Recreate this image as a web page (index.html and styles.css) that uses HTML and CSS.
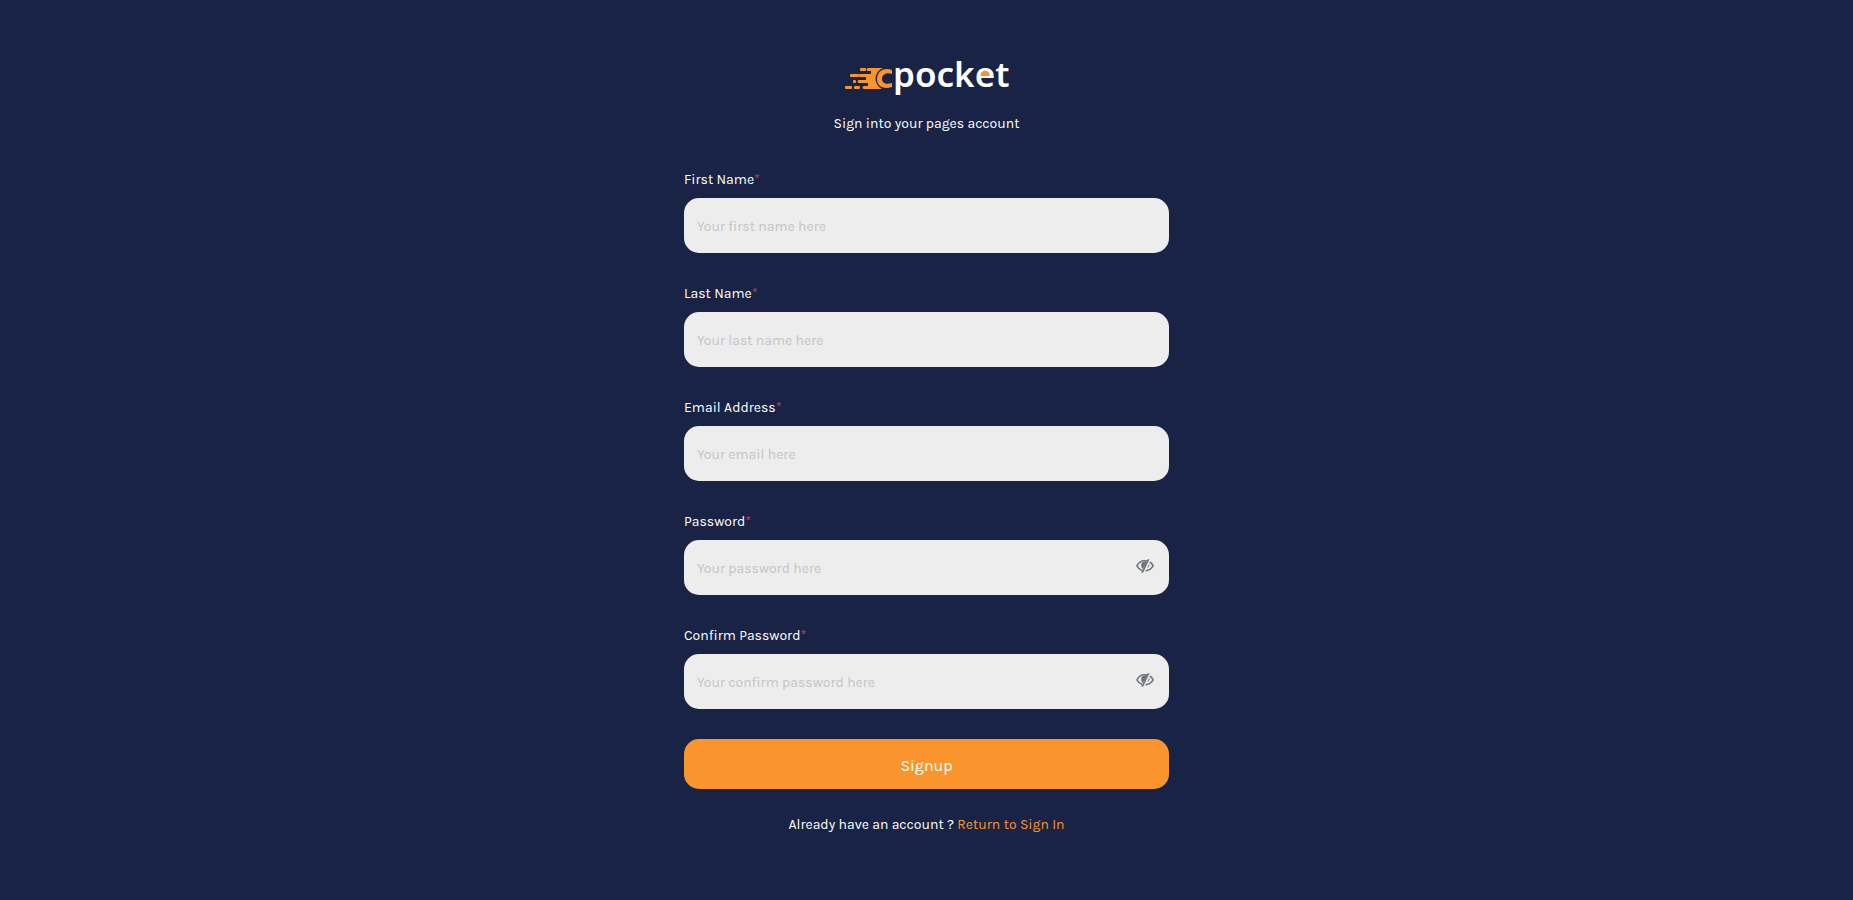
FILE: index.html
```html
<!DOCTYPE html>
<html lang="en">
<head>
<meta charset="utf-8">
<meta name="viewport" content="width=device-width, initial-scale=1">
<title>Sign up - cpocket</title>
<link rel="stylesheet" href="styles.css">
</head>
<body>
<svg class="sprite" aria-hidden="true">
  <symbol id="eye-off" viewBox="0 0 18 14">
    <path d="M11.2 2C6.4.9 2.6 3.2.9 6.9c1.1 2.3 2.9 3.9 5.2 4.6M13.8 3c1.5.9 2.6 2.2 3.3 3.9-1.6 3-4.2 4.7-7.6 4.8" fill="none" stroke="currentColor" stroke-width="1.5"/>
    <path d="M11.6.3h1.9L7.1 13.7H5.200zM10.8 2.2C5.2 1.600 3.700 6 6.700 10zM13.200 4.500c.6 1.800 0 3.600-2 4.900z" fill="currentColor"/>
  </symbol>
</svg>
<main class="page">
  <svg class="logo" viewBox="0 0 164 36" role="img" aria-label="cpocket">
    <g fill="#f9952c">
      <rect x="15" y="8" width="6" height="3" rx="1"/>
      <rect x="5" y="14" width="9" height="3" rx="1"/>
      <rect x="8" y="20" width="3" height="3" rx="1"/>
      <rect x="0" y="26" width="7" height="3" rx="1"/>
      <rect x="9" y="26" width="6" height="3" rx="1"/>
      <path d="M23 8h15c-8 3-11 15-1 21H19c-2 0-2-3 0-3h4v-3h-9c-2 0-2-3 0-3h7v-3h-6c-2 0-2-3 0-3h11v-3h-3c-2 0-2-3 0-3z"/>
      <path d="M47 14v-4c-9-3-15 2-15 9s6 11 15 8v-4c-6 2-10 0-10-4s4-7 10-5z"/>
    </g>
    <text class="wordmark" x="48" y="27">pocket</text>
    <path d="M135.500 16c0-7 9-7 9 0z" fill="#f9952c"/>
  </svg>
  <p class="intro">Sign into your pages account</p>
  <form class="form">
    <div class="field">
      <label for="first">First Name<span class="required">*</span></label>
      <input id="first" type="text" placeholder="Your first name here">
    </div>
    <div class="field">
      <label for="last">Last Name<span class="required">*</span></label>
      <input id="last" type="text" placeholder="Your last name here">
    </div>
    <div class="field">
      <label for="email">Email Address<span class="required">*</span></label>
      <input id="email" type="email" placeholder="Your email here">
    </div>
    <div class="field">
      <label for="password">Password<span class="required">*</span></label>
      <div class="secret">
        <input id="password" type="password" placeholder="Your password here">
        <button class="toggle" type="button" aria-label="Show password"><svg><use href="#eye-off"/></svg></button>
      </div>
    </div>
    <div class="field">
      <label for="confirm">Confirm Password<span class="required">*</span></label>
      <div class="secret">
        <input id="confirm" type="password" placeholder="Your confirm password here">
        <button class="toggle" type="button" aria-label="Show confirm password"><svg><use href="#eye-off"/></svg></button>
      </div>
    </div>
    <button class="submit" type="submit">Signup</button>
  </form>
  <p class="return">Already have an account ? <a href="#signin">Return to Sign In</a></p>
</main>
</body>
</html>
```
FILE: styles.css
```css
* { box-sizing: border-box; }
body {
  margin: 0;
  min-height: 100vh;
  background: #192345;
  color: #fff;
  font-family: Karla, Inter, sans-serif;
  font-size: 14px;
  line-height: 21px;
}
.sprite { display: none; }
.page {
  display: flex;
  flex-direction: column;
  align-items: center;
  max-width: 517px;
  margin: 0 auto;
  padding: 60px 16px;
}
.logo { width: 164px; height: 36px; overflow: visible; }
.wordmark {
  fill: #fff;
  font-family: "Noto Sans", sans-serif;
  font-size: 35px;
  font-weight: 600;
}
.intro { margin: 17px 0 35px; }
.form {
  display: flex;
  flex-direction: column;
  gap: 30px;
  width: 100%;
}
.field {
  display: flex;
  flex-direction: column;
  gap: 8px;
}
.required { color: #dc3545; }
input {
  width: 100%;
  height: 55px;
  padding: 1px 13px 0;
  border: 0;
  border-radius: 15px;
  background: #ededed;
  color: #192345;
  font: inherit;
}
input::placeholder { color: #c4c4c4; opacity: 1; }
.secret { position: relative; }
.secret input { display: block; padding-right: 48px; }
.toggle {
  position: absolute;
  top: 16px;
  right: 15px;
  display: flex;
  padding: 3px 0;
  border: 0;
  background: none;
  color: #6c757d;
}
.toggle svg { width: 18px; height: 14px; }
.submit {
  height: 50px;
  padding: 3px 16px 0;
  border: 0;
  border-radius: 15px;
  background: #f9952c;
  color: #fff;
  font: inherit;
  font-size: 16px;
}
.return { margin: 25px 0 0; }
.return a { color: #f9952c; text-decoration: none; }
```
